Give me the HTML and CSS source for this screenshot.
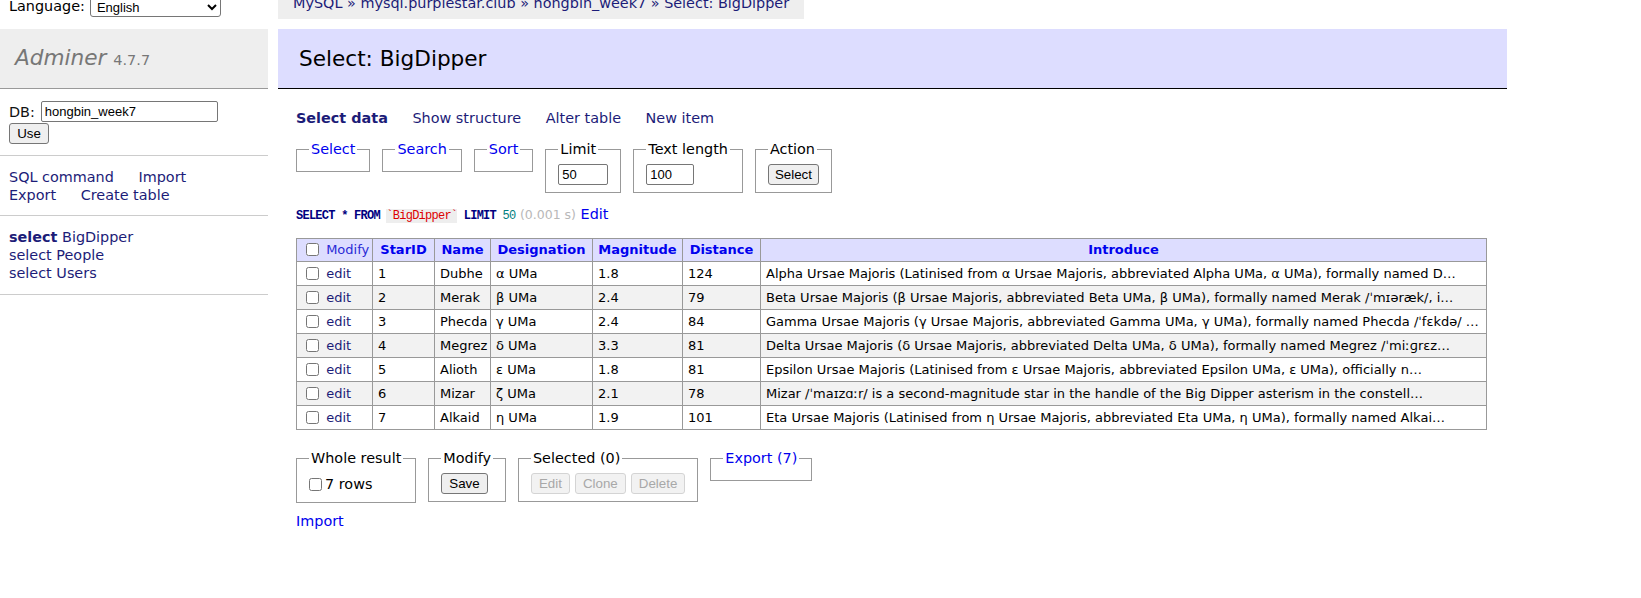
FILE: index.html
```html
<!DOCTYPE html>
<html lang="en">
<head>
<meta charset="utf-8">
<title>Select: BigDipper - Adminer</title>
<link rel="stylesheet" href="styles.css">
</head>
<body>
<div class="page">
  <aside class="menu">
    <div class="lang">Language: <select class="lang-select"><option>English</option></select></div>
    <h1 class="brand"><a class="brand-link" href="#">Adminer</a> <span class="version">4.7.7</span></h1>
    <form class="menu-sec db-form">
      <div class="db-row"><span class="db-label">DB:</span> <input class="field db-input" value="hongbin_week7"></div>
      <button type="button" class="btn">Use</button>
    </form>
    <p class="menu-sec menu-links">
      <a class="v" href="#">SQL command</a> <a class="v" href="#">Import</a><br>
      <a class="v" href="#">Export</a> <a class="v" href="#">Create table</a>
    </p>
    <ul class="menu-sec tables">
      <li><a class="v strong" href="#">select</a> <a class="v" href="#">BigDipper</a></li>
      <li><a class="v" href="#">select</a> <a class="v" href="#">People</a></li>
      <li><a class="v" href="#">select</a> <a class="v" href="#">Users</a></li>
    </ul>
  </aside>

  <main class="main">
    <div class="breadcrumb"><a class="v" href="#">MySQL</a> » <a class="v" href="#">mysql.purplestar.club</a> » <a class="v" href="#">hongbin_week7</a> » Select: BigDipper</div>
    <h2 class="title">Select: BigDipper</h2>
    <div class="content">
      <p class="nav"><a class="v strong" href="#">Select data</a> <a class="v" href="#">Show structure</a> <a class="v" href="#">Alter table</a> <a class="v" href="#">New item</a></p>

      <form class="filters">
        <fieldset class="fs"><legend><a href="#">Select</a></legend></fieldset>
        <fieldset class="fs"><legend><a href="#">Search</a></legend></fieldset>
        <fieldset class="fs"><legend><a href="#">Sort</a></legend></fieldset>
        <fieldset class="fs"><legend>Limit</legend><input class="field num-input" value="50"></fieldset>
        <fieldset class="fs"><legend>Text length</legend><input class="field len-input" value="100"></fieldset>
        <fieldset class="fs"><legend>Action</legend><button type="button" class="btn btn-select">Select</button></fieldset>
      </form>

      <p class="sql"><code class="code"><span class="kw">SELECT</span> * <span class="kw">FROM</span> <span class="bac">`BigDipper`</span> <span class="kw">LIMIT</span> <span class="num">50</span></code> <span class="time">(0.001 s)</span> <a href="#">Edit</a></p>

      <table class="data">
        <colgroup>
          <col class="c-mod"><col class="c-id"><col class="c-name"><col class="c-des"><col class="c-mag"><col class="c-dist"><col>
        </colgroup>
        <thead>
          <tr>
            <td class="mod-h"><input type="checkbox" class="cb"> <a href="#">Modify</a></td>
            <th><a href="#">StarID</a></th>
            <th><a href="#">Name</a></th>
            <th><a href="#">Designation</a></th>
            <th><a href="#">Magnitude</a></th>
            <th><a href="#">Distance</a></th>
            <th><a href="#">Introduce</a></th>
          </tr>
        </thead>
        <tbody>
          <tr><td><input type="checkbox" class="cb"> <a class="v" href="#">edit</a></td><td>1</td><td>Dubhe</td><td>α UMa</td><td>1.8</td><td>124</td><td class="intro">Alpha Ursae Majoris (Latinised from α Ursae Majoris, abbreviated Alpha UMa, α UMa), formally named D…</td></tr>
          <tr><td><input type="checkbox" class="cb"> <a class="v" href="#">edit</a></td><td>2</td><td>Merak</td><td>β UMa</td><td>2.4</td><td>79</td><td class="intro">Beta Ursae Majoris (β Ursae Majoris, abbreviated Beta UMa, β UMa), formally named Merak /ˈmɪəræk/, i…</td></tr>
          <tr><td><input type="checkbox" class="cb"> <a class="v" href="#">edit</a></td><td>3</td><td>Phecda</td><td>γ UMa</td><td>2.4</td><td>84</td><td class="intro">Gamma Ursae Majoris (γ Ursae Majoris, abbreviated Gamma UMa, γ UMa), formally named Phecda /ˈfɛkdə/ …</td></tr>
          <tr><td><input type="checkbox" class="cb"> <a class="v" href="#">edit</a></td><td>4</td><td>Megrez</td><td>δ UMa</td><td>3.3</td><td>81</td><td class="intro">Delta Ursae Majoris (δ Ursae Majoris, abbreviated Delta UMa, δ UMa), formally named Megrez /ˈmiːɡrɛz…</td></tr>
          <tr><td><input type="checkbox" class="cb"> <a class="v" href="#">edit</a></td><td>5</td><td>Alioth</td><td>ε UMa</td><td>1.8</td><td>81</td><td class="intro">Epsilon Ursae Majoris (Latinised from ε Ursae Majoris, abbreviated Epsilon UMa, ε UMa), officially n…</td></tr>
          <tr><td><input type="checkbox" class="cb"> <a class="v" href="#">edit</a></td><td>6</td><td>Mizar</td><td>ζ UMa</td><td>2.1</td><td>78</td><td class="intro">Mizar /ˈmaɪzɑːr/ is a second-magnitude star in the handle of the Big Dipper asterism in the constell…</td></tr>
          <tr><td><input type="checkbox" class="cb"> <a class="v" href="#">edit</a></td><td>7</td><td>Alkaid</td><td>η UMa</td><td>1.9</td><td>101</td><td class="intro">Eta Ursae Majoris (Latinised from η Ursae Majoris, abbreviated Eta UMa, η UMa), formally named Alkai…</td></tr>
        </tbody>
      </table>

      <form class="footer">
        <fieldset class="fs"><legend>Whole result</legend><label class="rows"><input type="checkbox" class="cb">7 rows</label></fieldset>
        <fieldset class="fs"><legend>Modify</legend><button type="button" class="btn">Save</button></fieldset>
        <fieldset class="fs"><legend>Selected (0)</legend><div class="btn-row"><button type="button" class="btn" disabled>Edit</button><button type="button" class="btn" disabled>Clone</button><button type="button" class="btn" disabled>Delete</button></div></fieldset>
        <fieldset class="fs fs-export"><legend><a href="#">Export (7)</a></legend></fieldset>
      </form>

      <p class="import"><a href="#">Import</a></p>
    </div>
  </main>
</div>
</body>
</html>
```

FILE: styles.css
```css
html, body {
  margin: 0;
  padding: 0;
  background: #fff;
}

body {
  font: 14.4px/18px "DejaVu Sans", Verdana, sans-serif;
  color: #000;
}

a {
  color: #0000ee;
  text-decoration: none;
}

a.v {
  color: #1c1c78;
}

.strong {
  font-weight: bold;
}

.page {
  display: flex;
  align-items: flex-start;
  margin-top: -10px;
}

/* ---------- sidebar ---------- */
.menu {
  width: 268px;
  flex: none;
}

.lang {
  height: 39px;
  box-sizing: border-box;
  padding: 7px 9px 0;
  display: flex;
  align-items: flex-start;
  gap: 5px;
}

.lang-select {
  width: 131px;
  height: 20px;
  font: 13px "Liberation Sans", Arial, sans-serif;
  border: 1px solid #767676;
  border-radius: 3px;
  background: #fff;
  padding: 0 2px;
  margin: 0;
}

.brand {
  margin: 0;
  height: 60px;
  box-sizing: border-box;
  padding: 0 15px;
  background: #eee;
  border-bottom: 1px solid #999;
  font-size: 21.6px;
  font-weight: normal;
  line-height: 58px;
  color: #777;
}

.brand-link {
  color: #777;
  font-style: italic;
}

.version {
  font-size: 14.5px;
  color: #777;
}

.menu-sec {
  margin: 0;
  padding: 11px 9px;
  border-bottom: 1px solid #ccc;
}

.db-form {
  padding-top: 12px;
}

.db-row {
  display: flex;
  align-items: center;
  gap: 6px;
}

.db-label {
  font-weight: normal;
  color: #111;
}

.field {
  font: 13px "Liberation Sans", Arial, sans-serif;
  border: 1px solid #767676;
  border-radius: 2px;
  padding: 1px 3px;
  height: 21px;
  box-sizing: border-box;
  margin: 0;
  background: #fff;
  color: #000;
}

.db-input {
  width: 177px;
}

.btn {
  font: 13.33px "Liberation Sans", Arial, sans-serif;
  height: 21px;
  padding: 0 7px;
  border: 1px solid #767676;
  border-radius: 3px;
  background: #efefef;
  color: #000;
  margin: 0;
}

.btn:disabled {
  color: #a8a8a8;
  border-color: #d4d4d4;
  background: #f2f2f2;
}

.db-form .btn {
  margin-top: 1px;
  width: 40px;
  padding: 0;
}

.menu-links {
  padding-top: 12px;
}

.menu-links a {
  margin-right: 20px;
}

.tables {
  list-style: none;
  padding-top: 12px;
  padding-bottom: 12px;
}

/* ---------- main ---------- */
.main {
  width: 1229px;
  flex: none;
  margin-left: 10px;
}

.breadcrumb {
  display: inline-block;
  background: #eee;
  height: 29px;
  line-height: 27px;
  padding: 0 15px;
  white-space: nowrap;
  color: #1c1c78;
}

.title {
  margin: 10px 0 0;
  height: 60px;
  box-sizing: border-box;
  padding: 0 21px;
  background: #ddf;
  border-bottom: 1px solid #000;
  font-size: 21.6px;
  font-weight: normal;
  line-height: 59px;
  color: #000;
}

.content {
  padding-left: 18px;
}

.nav {
  margin: 20px 0 0;
}

.nav a {
  margin-right: 20px;
}

.filters,
.footer {
  display: flex;
  align-items: flex-start;
  gap: 12px;
  margin: 13px 0 0;
}

.fs {
  margin: 0;
  padding: 6px 12px 7px;
  border: 1px solid #999;
  min-width: 0;
}

.fs legend {
  padding: 0 2px;
}

.num-input {
  width: 50px;
}

.len-input {
  width: 48px;
}

.btn-select {
  width: 51px;
  padding: 0;
}

.sql {
  margin: 12px 0 0;
}

.code {
  font: bold 12px "Liberation Mono", "Courier New", monospace;
  letter-spacing: -0.75px;
  color: #000080;
}

.kw {
  color: #000080;
}

.bac {
  color: #d00;
  font-weight: normal;
  background: #eee;
}

.num {
  color: #008080;
  font-weight: normal;
}

.time {
  color: #b8b8b8;
  font-size: 12.5px;
}

/* ---------- table ---------- */
.data {
  margin-top: 14px;
  border-collapse: collapse;
  table-layout: fixed;
  width: 1191px;
  font-size: 13px;
  line-height: 16px;
}

.c-mod { width: 76px; }
.c-id { width: 62px; }
.c-name { width: 56px; }
.c-des { width: 102px; }
.c-mag { width: 90px; }
.c-dist { width: 78px; }

.data td,
.data th {
  border: 1px solid #999;
  padding: 0 5px;
  height: 23px;
  white-space: nowrap;
  overflow: hidden;
  text-align: left;
}

.data thead td,
.data thead th {
  background: #ddf;
  height: 22px;
}

.data thead th {
  text-align: center;
  font-weight: bold;
}

.data tbody tr:nth-child(2n) {
  background: #f2f2f2;
}

.cb {
  width: 13px;
  height: 13px;
  margin: 0 3px 0 4px;
  vertical-align: -2px;
}

.mod-h a {
  color: #2a2ad6;
}

.rows {
  display: flex;
  align-items: center;
  height: 22px;
}

.rows .cb {
  margin: 0 3px 0 0;
  vertical-align: middle;
}

.btn-row {
  display: flex;
  gap: 5px;
}

.footer {
  margin-top: 19px;
}

.import {
  margin: 9px 0 0;
}
```
